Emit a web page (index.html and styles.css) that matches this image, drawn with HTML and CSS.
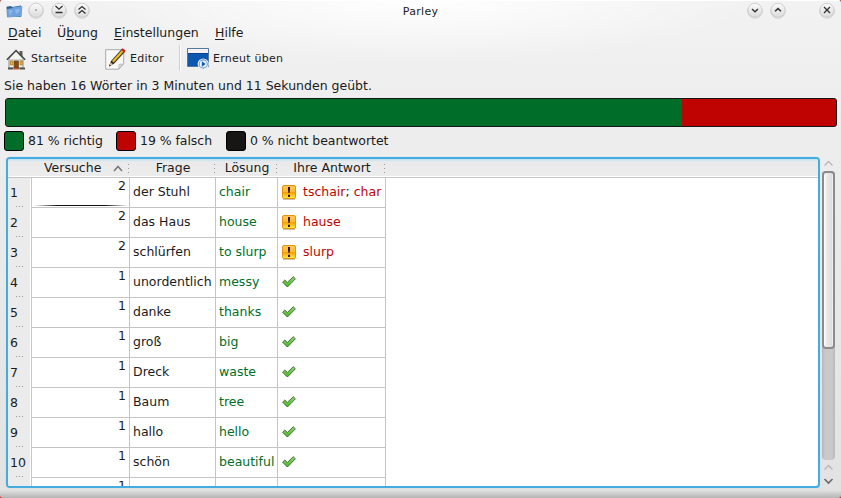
FILE: index.html
```
<!DOCTYPE html>
<html lang="de">
<head>
<meta charset="utf-8">
<title>Parley</title>
<link rel="stylesheet" href="styles.css">
</head>
<body>
<svg class="defs" width="0" height="0" aria-hidden="true">
  <defs>
    <linearGradient id="amber" x1="0" y1="0" x2="0" y2="1"><stop offset="0" stop-color="#ffc860"/><stop offset=".5" stop-color="#ffb830"/><stop offset=".52" stop-color="#f89a00"/><stop offset="1" stop-color="#fff04a"/></linearGradient>
    <linearGradient id="leaf" x1="0" y1="0" x2="0" y2="1"><stop offset="0" stop-color="#9bcf85"/><stop offset="1" stop-color="#46b81c"/></linearGradient>
    <linearGradient id="knob" x1="0" y1="0" x2="0" y2="1"><stop offset="0" stop-color="#fbfbfb"/><stop offset="1" stop-color="#dcdcdc"/></linearGradient>
    <symbol id="warn" viewBox="0 0 14 15"><path d="M1 14.5h12" stroke="#c9c0b0"/><rect x=".5" y=".5" width="13" height="13" rx="1.5" fill="url(#amber)" stroke="#e8920c"/><path d="M6 2h2v3l-.4 3H6.400L6 5zM6 9.700h2V12H6z" fill="#2c1600"/></symbol>
    <symbol id="check" viewBox="0 0 14 12"><path d="M.6 6.200 2.800 4l2.600 2.500L11.200.7l2.200 2.100-8 8.200z" fill="url(#leaf)" stroke="#2d6b22" stroke-width=".9" stroke-linejoin="round"/></symbol>
    <symbol id="disc" viewBox="0 0 16 17"><circle cx="8" cy="9" r="7.300" fill="none" stroke="#bbb" stroke-width="1" opacity=".6"/><circle cx="8" cy="8.200" r="7" fill="url(#knob)" stroke="#c4c4c4" stroke-width=".7"/></symbol>
  </defs>
</svg>
<div class="window">
  <header class="titlebar">
    <div class="buttons">
      <svg class="app" width="17" height="13" viewBox="0 0 17 13"><path d="M.5 1.800 5 1l1 1L15 .5V12H1z" fill="#315d8c"/><path d="M1 4 6 3.300l1-1L16.300 1l-.6 10.500L1.200 12.600z" fill="#6da2df"/><path d="m3 5.500 3-.5.500 2-2 1 1 1.500-1 1-1.500-2.500zM9 4.500l4-.8 1 2.500-2 1-1 2-1.500-2z" fill="#8fb9ea"/></svg>
      <svg class="b1" width="16" height="17"><use href="#disc"/><circle cx="8" cy="8" r=".8" fill="#666"/></svg>
      <svg class="b2" width="16" height="17"><use href="#disc"/><path d="m4.500 4 3.500 3.200L11.500 4M4.500 10.500h7" fill="none" stroke="#333" stroke-width="1.300"/></svg>
      <svg class="b3" width="16" height="17"><use href="#disc"/><path d="M4.500 7.600 8 4.500l3.500 3.100m-7 4L8 8.500l3.500 3.100" fill="none" stroke="#333" stroke-width="1.300"/></svg>
    </div>
    <div class="caption">Parley</div>
    <div class="buttons end">
      <svg width="16" height="17"><use href="#disc"/><path d="m5 7 3 2.700L11 7" fill="none" stroke="#333" stroke-width="1.500"/></svg>
      <svg class="b5" width="16" height="17"><use href="#disc"/><path d="m5 9.300 3-2.700 3 2.700" fill="none" stroke="#333" stroke-width="1.500"/></svg>
      <svg class="b6" width="16" height="17"><use href="#disc"/><path d="m5 5 6 6m0-6-6 6" fill="none" stroke="#333" stroke-width="1.400"/></svg>
    </div>
  </header>
  <nav class="menu"><span><u>D</u>atei</span><span>Ü<u>b</u>ung</span><span><u>E</u>instellungen</span><span><u>H</u>ilfe</span></nav>
  <div class="tools">
    <svg class="home" width="20" height="21" viewBox="0 0 20 21"><path d="M13.500 2h3v5h-3z" fill="#665a50"/><path d="M3 9.500 10 2l7 7.500V19H3z" fill="#f4f4ef" stroke="#888"/><path d="M.8 10.800 10 1.500l9.200 9.300" fill="none" stroke="#444" stroke-width="1.500"/><path d="M3 11h14" stroke="#aaa"/><path d="M8 12h4.500v7H8z" fill="#8a4a10" stroke="#5c4a2c" stroke-width=".7"/><path d="M4.500 12h2.300v4H4.500zM14 12h2.200v4H14z" fill="#e9b640" stroke="#b07820" stroke-width=".8"/><path d="M8 19h5v1.500H7z" fill="#b9502c"/><path d="M2 18.500h5v2H2zm11.500 0H19v2h-5.500z" fill="#55524a"/></svg>
    <span class="t1">Startseite</span>
    <svg class="edit" width="22" height="22" viewBox="0 0 22 22"><path d="M.7 1.700h18v14l-5 5.500h-13z" fill="#f8f8f8" stroke="#aaa"/><path d="m18 16-4 .5-.3 4.500z" fill="#ddd" stroke="#aaa" stroke-width=".6"/><path d="m4 18.500 2-5.500L17 .8l3.200 2.700L9 15.800z" fill="#342d18"/><path d="M7 13 17 2l1.700 1.400L8.700 14.500z" fill="#efbd25"/><path d="m16 1.800 1.700-1.500 3 2.300-1.500 2z" fill="#c72929"/><path d="m4.200 18.200 1.400-3.800 2.300 1.900z" fill="#e8c88e"/><path d="m4 18.500.7-1.900 1.200 1z" fill="#111"/></svg>
    <span class="t2">Editor</span>
    <i class="sep"></i>
    <svg class="again" width="22" height="22" viewBox="0 0 22 22"><path d="M.5.500h21v18H.5z" fill="#0c57b0" stroke="#55789f"/><path d="M1 1h20v4H1z" fill="#f2f2f2"/><path d="M1 5.500h20" stroke="#0a438c"/><circle cx="16.200" cy="16" r="5" fill="#1f66b5" stroke="#e5edf5" stroke-width="1.200"/><circle cx="16.200" cy="16" r="3.800" fill="#e9f1fb"/><path d="m14.900 13.200 3.800 2.800-3.800 2.800z" fill="#155bab"/></svg>
    <span class="t3">Erneut üben</span>
  </div>
  <p class="summary">Sie haben 16 Wörter in 3 Minuten und 11 Sekunden geübt.</p>
  <div class="score"><b></b></div>
  <div class="legend"><i class="ok"></i><span class="l1">81 % richtig</span><i class="bad"></i><span class="l2">19 % falsch</span><i class="none"></i><span class="l3">0 % nicht beantwortet</span></div>
  <main class="content">
    <div class="frame">
      <div class="head"><div></div><div class="h1">Versuche<svg width="10" height="7" viewBox="0 0 10 7"><path d="m1 6 4-4.500L9 6" fill="none" stroke="#777" stroke-width="1.500"/></svg></div><div class="h2">Frage</div><div class="h3">Lösung</div><div class="h4">Ihre Antwort</div></div>
      <div class="row current"><div class="n">1</div><div class="c">2</div><div>der Stuhl</div><div class="g">chair</div><div class="a"><svg class="w"><use href="#warn"/></svg><span>tschair<em>;</em> char</span></div></div>
      <div class="row"><div class="n">2</div><div class="c">2</div><div>das Haus</div><div class="g">house</div><div class="a"><svg class="w"><use href="#warn"/></svg><span>hause</span></div></div>
      <div class="row"><div class="n">3</div><div class="c">2</div><div>schlürfen</div><div class="g">to slurp</div><div class="a"><svg class="w"><use href="#warn"/></svg><span>slurp</span></div></div>
      <div class="row"><div class="n">4</div><div class="c">1</div><div>unordentlich</div><div class="g">messy</div><div class="a"><svg class="k"><use href="#check"/></svg></div></div>
      <div class="row"><div class="n">5</div><div class="c">1</div><div>danke</div><div class="g">thanks</div><div class="a"><svg class="k"><use href="#check"/></svg></div></div>
      <div class="row"><div class="n">6</div><div class="c">1</div><div>groß</div><div class="g">big</div><div class="a"><svg class="k"><use href="#check"/></svg></div></div>
      <div class="row"><div class="n">7</div><div class="c">1</div><div>Dreck</div><div class="g">waste</div><div class="a"><svg class="k"><use href="#check"/></svg></div></div>
      <div class="row"><div class="n">8</div><div class="c">1</div><div>Baum</div><div class="g">tree</div><div class="a"><svg class="k"><use href="#check"/></svg></div></div>
      <div class="row"><div class="n">9</div><div class="c">1</div><div>hallo</div><div class="g">hello</div><div class="a"><svg class="k"><use href="#check"/></svg></div></div>
      <div class="row"><div class="n">10</div><div class="c">1</div><div>schön</div><div class="g">beautiful</div><div class="a"><svg class="k"><use href="#check"/></svg></div></div>
      <div class="row"><div class="n"></div><div class="c">1</div><div>weiß</div><div class="g">white</div><div class="a"><svg class="k"><use href="#check"/></svg></div></div>
    </div>
    <div class="scroll">
      <svg width="11" height="14" viewBox="0 0 11 14"><path d="m1.500 8.500 4-4 4 4" fill="none" stroke="#b8b8b8" stroke-width="1.400"/></svg>
      <div class="track"><div class="thumb"></div></div>
      <svg width="11" height="28" viewBox="0 0 11 28"><path d="m1.500 9.500 4-4 4 4" fill="none" stroke="#b8b8b8" stroke-width="1.400"/><path d="m1.500 19 4 4 4-4" fill="none" stroke="#6a6a6a" stroke-width="1.600"/></svg>
    </div>
  </main>
</div>
</body>
</html>
```
FILE: styles.css
```
* { box-sizing: border-box; }
body { margin: 0; background: #b93a3a; overflow: hidden; }
.defs { position: absolute; }
.window {
  width: 841px; height: 498px; overflow: hidden;
  display: flex; flex-direction: column;
  border-radius: 3px;
  font: 12.5px/18px "DejaVu Sans", sans-serif; color: #1b1b1b;
  background:
    linear-gradient(#e2e2e200, #b4b4b4) 0 100% / 100% 8px no-repeat,
    radial-gradient(ellipse 330px 62px at 50% 0, #fff, #fff0) no-repeat,
    linear-gradient(#f2f2f2, #eee 100px, #ededed 150px, #e2e2e2);
}
svg { display: block; flex: none; }
.titlebar { display: grid; grid-template-columns: 200px 441px 200px; height: 23px; border-top: 1px solid #fff; }
.buttons { display: flex; padding: 1px 0 0 6px; }
.buttons.end { padding-left: 106px; }
.app { margin-top: 3px; }
.b1 { margin-left: 5px; }
.b2, .b3, .b5 { margin-left: 7px; }
.b6 { margin-left: 33px; }
.caption { text-align: center; font-size: 11px; line-height: 21px; letter-spacing: .3px; }
.menu { display: flex; height: 21px; padding-left: 8px; line-height: 20px; }
.menu span:nth-child(1) { width: 49px; }
.menu span:nth-child(2) { width: 57px; }
.menu span:nth-child(3) { width: 101px; }
.menu u { text-underline-offset: 2px; text-decoration-skip-ink: none; }
.tools { display: flex; height: 32px; padding-left: 6px; font-size: 11px; line-height: 29px; letter-spacing: .25px; }
.home { margin-top: 5px; }
.edit, .again { margin-top: 4px; }
.t1 { width: 79px; padding-left: 5px; }
.t2 { width: 52px; padding-left: 3px; }
.t3 { padding-left: 4px; }
.sep { width: 2px; height: 26px; margin: 1px 6px 0 0; border-left: 1px solid #d0d0d0; border-right: 1px solid #fff; }
.summary { margin: 0; height: 22px; padding-left: 4px; line-height: 19px; }
.score { width: 832px; height: 29px; margin-left: 5px; border: 1px solid #171717; border-radius: 3px; background: #bf0303; overflow: hidden; }
.score b { display: block; width: 81.500%; height: 100%; background: #006e29; }
.legend { display: flex; align-items: center; height: 26px; margin: 1px 0 3px 4px; letter-spacing: -.05px; }
.legend i { width: 20px; height: 20px; border: 1px solid #000; border-radius: 3px; }
.ok { background: #006e29; }
.bad { background: #bf0303; }
.none { background: #181615; }
.l1 { width: 92px; padding-left: 4px; }
.l2 { width: 90px; padding-left: 4px; }
.l3 { padding-left: 4px; }
.content { display: flex; height: 331px; padding-left: 6px; }
.frame { width: 814px; height: 331px; border: 2px solid #43ace0; border-radius: 4px; overflow: hidden; background: linear-gradient(90deg, #e8e8e8 23px, #fff 23px); box-shadow: 0 0 1px #9fd3ee; }
.head, .row { display: grid; grid-template-columns: 24px 98px 86px 62px 108px; }
.head { height: 19px; line-height: 18px; border-bottom: 1px solid #c5c5c5; background: linear-gradient(#c2e2f2, #eaeaea 3px, #ececec 17px, #fff 17px); }
.head div { text-align: center; position: relative; }
.head div + div::after { content: ""; position: absolute; right: 1px; top: 5px; width: 1px; height: 9px; background: repeating-linear-gradient(#999 0 1px, transparent 1px 4px); }
.head .h1 { display: flex; align-items: center; padding-left: 12px; }
.h1 svg { margin-left: 12px; }
.row { height: 30px; }
.row div { border-right: 1px solid #c5c5c5; border-bottom: 1px solid #c5c5c5; padding-left: 3px; line-height: 28px; white-space: nowrap; }
.row .n { position: relative; border-bottom: 0; padding-left: 2px; line-height: 29px; background: #ebebeb; box-shadow: inset -1px 0 #fff; }
.n:not(:empty)::after { content: ""; position: absolute; left: 8px; top: 28px; width: 7px; height: 1px; background: repeating-linear-gradient(90deg, #999 0 1px, transparent 1px 3px); }
.row .c { text-align: right; padding-right: 3px; line-height: 15px; }
.row.current .c { background: linear-gradient(90deg, transparent, #111 25%, #111 75%, transparent) 50% 27px / 94px 1px no-repeat; }
.row .g { color: #006e29; }
.row .a { display: flex; padding-left: 4px; color: #bf0303; }
.a em { color: #1b1b1b; font-style: normal; }
.w { width: 14px; height: 15px; margin: 7px 7px 0 0; }
.k { width: 14px; height: 12px; margin-top: 8px; }
.scroll { display: flex; flex-direction: column; align-items: center; width: 13px; margin-left: 2px; }
.track { width: 13px; height: 289px; border-radius: 4px; background: linear-gradient(90deg, #b5b5b5, #c9c9c9 3px, #c9c9c9 10px, #b8b8b8); }
.thumb { height: 178px; border: 2px solid #8b8b8b; border-radius: 4px; background: linear-gradient(90deg, #fff, #e8e8e8 3px, #dedede 8px, #fff); }
```
